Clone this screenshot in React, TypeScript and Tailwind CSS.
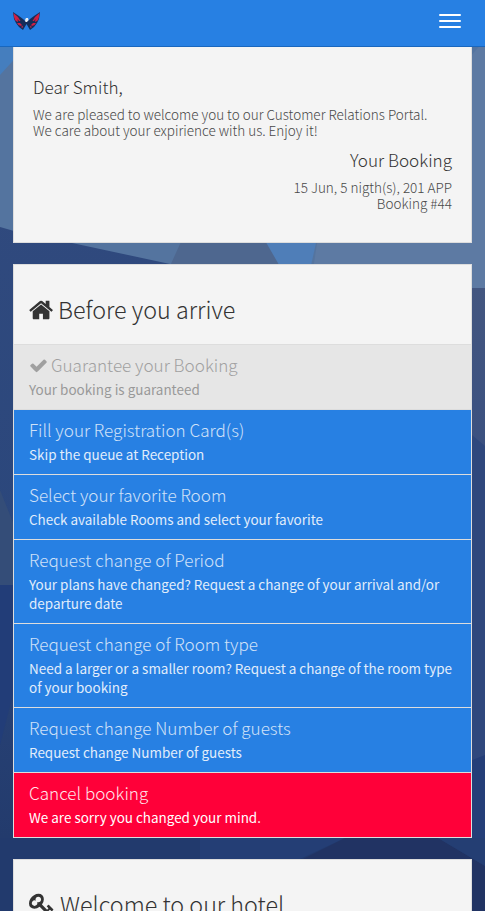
import type { ReactNode } from "react";

const HOME =
  "M1408 992v480q0 26-19 45t-45 19h-384v-384h-256v384h-384q-26 0-45-19t-19-45v-480q0-1 .5-3t.5-3l575-474 575 474q1 2 1 6zm223-69l-62 74q-8 9-21 11h-3q-13 0-21-7l-692-577-692 577q-12 8-24 7-13-2-21-11l-62-74q-8-10-7-23.5t11-21.5l719-599q32-26 76-26t76 26l244 204v-195q0-14 9-23t23-9h192q14 0 23 9t9 23v408l219 182q10 8 11 21.5t-7 23.5z";
const CHECK =
  "M1671 566q0 40-28 68l-724 724-136 136q-28 28-68 28t-68-28l-136-136-362-362q-28-28-28-68t28-68l136-136q28-28 68-28t68 28l294 295 656-657q28-28 68-28t68 28l136 136q28 28 28 68z";
const KEY =
  "M832 512q0-80-56-136t-136-56-136 56-56 136q0 42 19 83-41-19-83-19-80 0-136 56t-56 136 56 136 136 56 136-56 56-136q0-42-19-83 41 19 83 19 80 0 136-56t56-136zm851 704q0 17-49 66t-66 49q-9 0-28.5-16t-36.5-33-38.5-40-24.5-26l-96 96 220 220q28 28 28 68 0 42-39 81t-81 39q-40 0-68-28l-671-671q-176 131-365 131-163 0-265.5-102.5t-102.5-265.5q0-160 95-313t248-248 313-95q163 0 265.5 102.5t102.5 265.5q0 189-131 365l355 355 96-96q-3-3-26-24.5t-40-38.5-33-36.5-16-28.5q0-17 49-66t66-49q13 0 23 10 6 6 46 44.5t82 79.5 86.5 86 73 78 28.5 41z";

function Backdrop() {
  return (
    <svg className="absolute inset-0 h-full w-full" viewBox="0 0 485 911" preserveAspectRatio="none" aria-hidden="true">
      <defs>
        <linearGradient id="base" x1="0" y1="0" x2="0" y2="1">
          <stop offset="0.14" stopColor="#314a7e" />
          <stop offset="0.6" stopColor="#2b477c" />
          <stop offset="1" stopColor="#213869" />
        </linearGradient>
        <linearGradient id="right" x1="0" y1="0" x2="0" y2="1">
          <stop offset="0" stopColor="#435680" />
          <stop offset="1" stopColor="#2b4680" />
        </linearGradient>
      </defs>
      <rect width="485" height="911" fill="url(#base)" />
      <path d="M0 40H485V288H400L170 264L72 243L14 231L0 227Z" fill="#54749f" />
      <path d="M0 40H32L0 75Z" fill="#457ebe" />
      <path d="M200 200H256L282 266H170Z" fill="#4e678f" />
      <path d="M256 225H320L310 270H282Z" fill="#4f7eb8" />
      <path d="M320 225L485 40V288H310Z" fill="#5d7aa3" />
      <path d="M460 288H485V760H460Z" fill="url(#right)" />
      <path d="M460 425L485 446V760H460Z" fill="#2f487d" />
      <path d="M0 490L14 525V585H0Z" fill="#344d78" />
      <path d="M0 585H14V690L0 745Z" fill="#223d78" />
      <path d="M460 765L485 755V911H460Z" fill="#243e78" />
      <path d="M0 838H485V911H0Z" fill="#223a6d" />
      <path d="M200 838H345L300 859H200Z" fill="#243e75" />
      <path d="M303 859L345 838H438L485 866V911H300Z" fill="#213363" />
      <path d="M438 838H485V866Z" fill="#243e73" />
    </svg>
  );
}

function Icon({ d, className }: { d: string; className: string }) {
  return (
    <svg viewBox="0 0 1792 1792" fill="currentColor" className={className} aria-hidden="true">
      <path d={d} />
    </svg>
  );
}

function Logo() {
  return (
    <svg viewBox="0 0 27 19" className="h-[19px] w-[27px]" aria-hidden="true">
      <path d="M0 0L6 4L10 7L12 9L13.5 6L15 9L17 7L21 4L27 0L26 7L24 11L21 15L17 18L13.5 12L10 18L6 15L3 11L1 7Z" fill="#152d59" />
      <path d="M.5 1L5 5L7.500 9L6 9L4.500 7L5 10L3 9L2 8L1 5Z M4 11L7 11L9 13L8 14L5.500 13Z" fill="#cf1f43" />
      <path d="M26.500 1L22 5L19.500 9L21 9L22.500 7L22 10L24 9L25 8L26 5Z M23 11L20 11L18 13L19 14L21.500 13Z" fill="#cf1f43" />
      <path d="M8 15L10 13.500L9.500 16Z M19 15L17 13.500L17.500 16Z" fill="#d42345" />
      <path d="M12 8L13 6H15L15.500 8L14 10H12.500Z" fill="#e9eef4" />
    </svg>
  );
}

function Row({ title, text, className, icon }: { title: string; text: ReactNode; className: string; icon?: ReactNode }) {
  return (
    <a className={`block border-t border-[#ddd] px-[15px] py-[10px] ${className}`}>
      <h4 className="flex h-5 items-center text-[17.1px] leading-5 font-light whitespace-nowrap opacity-90">
        {icon}
        {title}
      </h4>
      <p className="mt-[5px] text-[13.46px] leading-[19px] whitespace-nowrap">{text}</p>
    </a>
  );
}

export default function App() {
  const blue = "bg-[#2780e3] text-[#e1edfb]";
  return (
    <div className="relative h-[911px] w-[485px] overflow-hidden font-['Noto_Sans_CJK_JP',sans-serif] text-[#333]">
      <Backdrop />
      <div className="relative flex h-full flex-col">
        <header className="flex h-[47px] shrink-0 items-start justify-between border-b border-[#1967be] bg-[#2780e3] pl-[13px] pr-6">
          <div className="pt-3">
            <Logo />
          </div>
          <div className="flex flex-col gap-1 pt-[14px]">
            <span className="h-0.5 w-[22px] rounded-[1px] bg-white" />
            <span className="h-0.5 w-[22px] rounded-[1px] bg-white" />
            <span className="h-0.5 w-[22px] rounded-[1px] bg-white" />
          </div>
        </header>
        <main className="flex flex-col gap-[21px] px-[13px]">
          <section className="h-[196px] border border-t-0 border-[#ddd] bg-[#f4f4f4] px-[19px] pt-[30px] font-light">
            <h4 className="text-[17.1px] leading-5">Dear Smith,</h4>
            <p className="mt-[9px] text-[13.5px] leading-4 whitespace-nowrap text-[#484848]">
              We are pleased to welcome you to our Customer Relations Portal.
              <br />
              We care about your expirience with us. Enjoy it!
            </p>
            <div className="mt-3 text-right">
              <h4 className="text-[17.1px] leading-5">Your Booking</h4>
              <p className="mt-[9px] text-[13.5px] leading-4 text-[#484848]">
                15 Jun, 5 nigth(s), 201 APP
                <br />
                Booking #44
              </p>
            </div>
          </section>
          <section className="border border-[#ddd] bg-[#f4f4f4]">
            <h2 className="flex h-[79px] items-center gap-[3px] px-[15px] pt-[10px] text-[23.3px] font-light whitespace-nowrap">
              <Icon d={HOME} className="h-[26px] w-[26px]" />
              Before you arrive
            </h2>
            <Row
              title="Guarantee your Booking"
              text="Your booking is guaranteed"
              className="bg-[#e6e6e6] text-[#999]"
              icon={<Icon d={CHECK} className="mr-[3px] h-[19px] w-[19px]" />}
            />
            <Row title="Fill your Registration Card(s)" text="Skip the queue at Reception" className={blue} />
            <Row title="Select your favorite Room" text="Check available Rooms and select your favorite" className={blue} />
            <Row
              title="Request change of Period"
              text={<>Your plans have changed? Request a change of your arrival and/or<br />departure date</>}
              className={blue}
            />
            <Row
              title="Request change of Room type"
              text={<>Need a larger or a smaller room? Request a change of the room type<br />of your booking</>}
              className={blue}
            />
            <Row title="Request change Number of guests" text="Request change Number of guests" className={blue} />
            <Row title="Cancel booking" text="We are sorry you changed your mind." className="bg-[#ff0039] text-white" />
          </section>
          <section className="border border-[#ddd] bg-[#f4f4f4]">
            <h2 className="flex h-[79px] items-center gap-[5px] px-[15px] pt-[10px] text-[23.3px] font-light whitespace-nowrap">
              <Icon d={KEY} className="h-[26px] w-[26px]" />
              Welcome to our hotel
            </h2>
          </section>
        </main>
      </div>
    </div>
  );
}
